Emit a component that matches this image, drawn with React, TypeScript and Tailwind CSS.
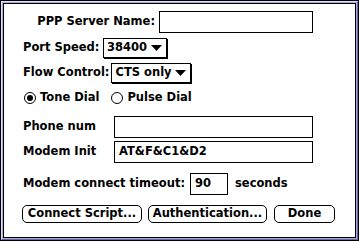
import { useState } from "react";

const font = { fontFamily: '"DejaVu Sans", "Liberation Sans", sans-serif' };

function Field({ value = "", className = "" }: { value?: string; className?: string }) {
  return (
    <div className={`h-[22px] border border-black bg-white flex items-center pl-[4px] ${className}`}>
      {value}
    </div>
  );
}

function Popup({ label, className = "" }: { label: string; className?: string }) {
  return (
    <div className={`h-[20px] border border-black bg-white shadow-[1px_1px_0_#000] flex items-center justify-between pl-[3px] pr-[4px] ${className}`}>
      <span>{label}</span>
      <svg width="11" height="6" viewBox="0 0 11 6">
        <polygon points="0,0 11,0 5.5,6" fill="#000" />
      </svg>
    </div>
  );
}

function Radio({ checked, label, onClick }: { checked: boolean; label: string; onClick: () => void }) {
  return (
    <button type="button" onClick={onClick} className="flex items-center gap-[4px]">
      <span className="w-[12px] h-[12px] rounded-full border border-black flex items-center justify-center bg-white">
        {checked && <span className="w-[6px] h-[6px] rounded-full bg-black" />}
      </span>
      <span>{label}</span>
    </button>
  );
}

function Button({ label, className = "" }: { label: string; className?: string }) {
  return (
    <button type="button" className={`h-[18px] border border-black rounded-[5px] bg-white flex items-center justify-center ${className}`}>
      {label}
    </button>
  );
}

export default function App() {
  const [dial, setDial] = useState("tone");

  return (
    <div className="w-[359px] h-[241px] border border-black bg-[#aaaadd]" style={font}>
      <div className="w-full h-full border-t border-l border-t-[#ddddff] border-l-[#ddddff] border-b border-r border-b-[#666699] border-r-[#666699] p-[1px]">
        <div className="w-full h-full border border-black bg-white text-[11.5px] font-bold text-black leading-none">
          {/* PPP server */}
          <div className="flex items-center mt-[7px]">
            <div className="w-[151px] text-right">PPP Server Name:</div>
            <Field className="ml-[4px] w-[154px]" />
          </div>

          {/* port speed */}
          <div className="flex items-center mt-[5px] pl-[19px]">
            <span className="w-[80px]">Port Speed:</span>
            <Popup label="38400" className="w-[64px]" />
          </div>

          {/* flow control */}
          <div className="flex items-center mt-[5px] pl-[19px]">
            <span>Flow Control:</span>
            <Popup label="CTS only" className="ml-[2px] w-[80px]" />
          </div>

          {/* dial */}
          <div className="flex items-center gap-[12px] mt-[9px] pl-[20px]">
            <Radio checked={dial === "tone"} label="Tone Dial" onClick={() => setDial("tone")} />
            <Radio checked={dial === "pulse"} label="Pulse Dial" onClick={() => setDial("pulse")} />
          </div>

          {/* phone */}
          <div className="flex items-center mt-[12px] pl-[19px]">
            <span className="w-[91px]">Phone num</span>
            <Field className="w-[199px]" />
          </div>

          {/* modem init */}
          <div className="flex items-center mt-[3px] pl-[19px]">
            <span className="w-[91px]">Modem Init</span>
            <Field value="AT&F&C1&D2" className="w-[199px]" />
          </div>

          {/* timeout */}
          <div className="flex items-center mt-[10px] pl-[19px]">
            <span className="w-[167px]">Modem connect timeout:</span>
            <Field value="90" className="w-[38px] h-[21px]" />
            <span className="ml-[7px]">seconds</span>
          </div>

          {/* buttons */}
          <div className="flex items-center mt-[10px] pl-[18px] gap-[6px]">
            <Button label="Connect Script..." className="w-[120px]" />
            <Button label="Authentication..." className="w-[119px]" />
            <Button label="Done" className="ml-[1px] w-[61px]" />
          </div>
        </div>
      </div>
    </div>
  );
}
